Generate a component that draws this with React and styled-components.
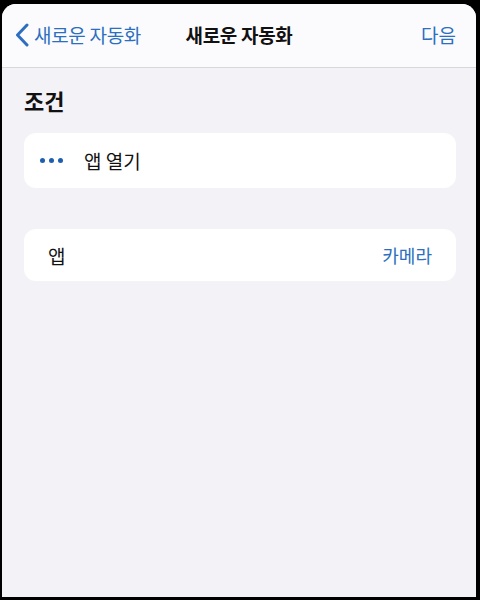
import React from 'react';
import styled, { createGlobalStyle } from 'styled-components';

const GlobalStyle = createGlobalStyle`
  html, body {
    margin: 0;
    padding: 0;
    background: #000;
  }
  body {
    font-family: "Noto Sans CJK KR", "Noto Sans", sans-serif;
  }
`;

const Screen = styled.div`
  width: 480px;
  height: 600px;
  box-sizing: border-box;
  padding: 4px 4px 3px 2px;
  background: #000;
  display: flex;
`;

const Sheet = styled.div`
  flex: 1;
  display: flex;
  flex-direction: column;
  background: #f3f3f7;
  border-radius: 14px 14px 0 0;
  overflow: hidden;
`;

const NavBar = styled.div`
  height: 64px;
  box-sizing: border-box;
  display: flex;
  align-items: center;
  justify-content: space-between;
  padding: 0 20px 2px 13px;
  background: #fbfbfd;
  border-bottom: 1px solid #d8d8dc;
  position: relative;
`;

const BackButton = styled.div`
  display: flex;
  align-items: center;
  gap: 5px;
  color: #2c6fc0;
  font-size: 19px;
  letter-spacing: -0.3px;
`;

const Title = styled.div`
  position: absolute;
  left: 0;
  right: 0;
  text-align: center;
  font-size: 19px;
  font-weight: 700;
  color: #111;
  letter-spacing: -0.3px;
  pointer-events: none;
`;

const NextButton = styled.div`
  color: #2c6fc0;
  font-size: 19px;
`;

const Content = styled.div`
  padding: 17px 20px 0 22px;
  display: flex;
  flex-direction: column;
`;

const SectionTitle = styled.div`
  font-size: 22px;
  font-weight: 700;
  color: #111;
  line-height: 30px;
  margin-bottom: 18px;
`;

const Card = styled.div`
  background: #fff;
  border-radius: 12px;
  height: ${p => p.$h}px;
  display: flex;
  align-items: center;
  padding: 0 24px 0 ${p => p.$pl}px;
  margin-bottom: ${p => p.$mb || 0}px;
`;

const Dots = styled.div`
  display: flex;
  gap: 4px;
  margin-right: 21px;
`;

const Dot = styled.span`
  width: 5px;
  height: 5px;
  border-radius: 50%;
  background: #1f5eaf;
`;

const Label = styled.div`
  font-size: 19px;
  color: #111;
  flex: 1;
`;

const Value = styled.div`
  font-size: 18px;
  color: #2c6fc0;
`;

export default function App() {
  return (
    <>
      <GlobalStyle />
      <Screen>
        <Sheet>
          <NavBar>
            <BackButton>
              <svg width="14" height="24" viewBox="0 0 14 24">
                <path d="M12 2 L2.5 12 L12 22" fill="none" stroke="#2c6fc0" strokeWidth="3" strokeLinecap="round" strokeLinejoin="round" />
              </svg>
              새로운 자동화
            </BackButton>
            <Title>새로운 자동화</Title>
            <NextButton>다음</NextButton>
          </NavBar>
          <Content>
            <SectionTitle>조건</SectionTitle>
            <Card $h={55} $pl={16} $mb={41}>
              <Dots>
                <Dot />
                <Dot />
                <Dot />
              </Dots>
              <Label>앱 열기</Label>
            </Card>
            <Card $h={52} $pl={24}>
              <Label>앱</Label>
              <Value>카메라</Value>
            </Card>
          </Content>
        </Sheet>
      </Screen>
    </>
  );
}
